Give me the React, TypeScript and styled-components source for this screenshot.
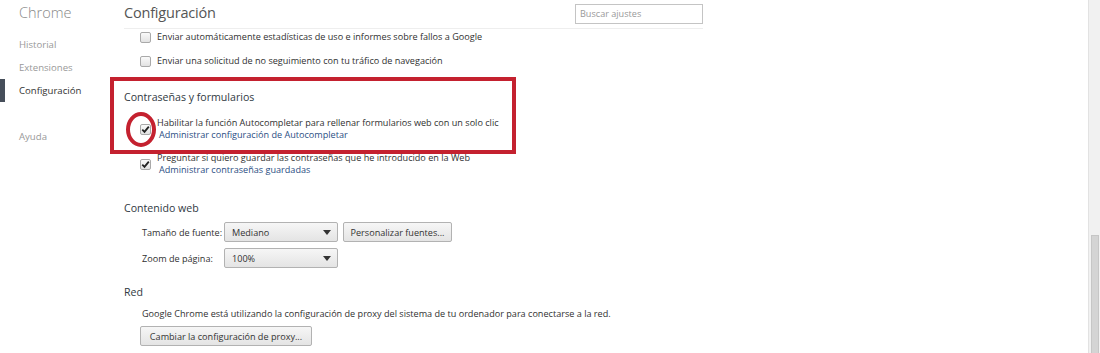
import styled, { createGlobalStyle } from 'styled-components';

const GlobalStyle = createGlobalStyle`
  html, body {
    margin: 0;
    padding: 0;
    background: #fff;
  }
  body {
    font-family: 'Open Sans', 'Noto Sans', sans-serif;
    font-size: 9.1px;
    color: #303030;
  }
`;

const Page = styled.div`
  display: flex;
  width: 1100px;
  height: 353px;
  overflow: hidden;
`;

const Sidebar = styled.nav`
  width: 110px;
  flex-shrink: 0;
  display: flex;
  flex-direction: column;
`;

const Brand = styled.div`
  height: 25px;
  padding-left: 19px;
  font-size: 14.5px;
  font-weight: 300;
  line-height: 25px;
  color: #888;
  margin-bottom: 8px;
`;

const NavItem = styled.div<{ $active?: boolean; $gap?: number }>`
  height: 23px;
  line-height: 23px;
  margin-top: ${(p) => p.$gap ?? 0}px;
  padding-left: 14px;
  font-size: 9.6px;
  color: ${(p) => (p.$active ? '#333' : '#999')};
  border-left: 5px solid ${(p) => (p.$active ? '#464e5a' : 'transparent')};
`;

const Main = styled.main`
  flex: 1;
  padding-left: 14px;
`;

const Content = styled.div`
  width: 579px;
`;

const Header = styled.header`
  height: 28px;
  display: flex;
  align-items: center;
  justify-content: space-between;
  border-bottom: 1px solid #eee;
`;

const Title = styled.h1`
  margin: -4px 0 0;
  font-size: 14.5px;
  font-weight: 400;
  letter-spacing: -0.2px;
  color: #555;
`;

const Search = styled.input`
  width: 128px;
  height: 20px;
  box-sizing: border-box;
  margin: -1px 0 0;
  border: 1px solid #c4c4c4;
  font-family: inherit;
  font-size: 9.1px;
  padding: 0 4px;
  color: #333;
  &::placeholder {
    color: #999;
  }
`;

const Row = styled.div<{ $top: number }>`
  display: flex;
  align-items: center;
  gap: 6px;
  margin-top: ${(p) => p.$top}px;
  padding-left: 16px;
`;

const Lines = styled.div`
  display: flex;
  flex-direction: column;
`;

const Line = styled.span`
  height: 12px;
  line-height: 12px;
  white-space: nowrap;
`;

const Link = styled.span`
  display: block;
  height: 12px;
  line-height: 12px;
  padding-left: 2px;
  color: #2a4e83;
  white-space: nowrap;
`;

const Box = styled.span`
  width: 11px;
  height: 11px;
  box-sizing: border-box;
  flex-shrink: 0;
  border: 1px solid #a9a9a9;
  border-radius: 2px;
  background: linear-gradient(#fafafa, #e2e2e2);
  display: flex;
  align-items: center;
  justify-content: center;
`;

const Highlight = styled.section`
  position: relative;
  width: 406px;
  height: 77px;
  box-sizing: border-box;
  margin: 10px 0 0 -14px;
  border: 4px solid #c4212f;
  padding: 8px 0 0 10px;
`;

const Ring = styled.span`
  position: absolute;
  left: 12px;
  top: 31px;
  width: 30px;
  height: 35px;
  box-sizing: border-box;
  border: 4px solid #c4212f;
  border-radius: 50%;
`;

const SectionTitle = styled.h2<{ $top?: number }>`
  margin: ${(p) => p.$top ?? 0}px 0 0;
  height: 16px;
  line-height: 16px;
  font-size: 10.6px;
  font-weight: 400;
  color: #303942;
`;

const FieldRow = styled.div<{ $top: number }>`
  display: flex;
  align-items: center;
  height: 20px;
  margin-top: ${(p) => p.$top}px;
  padding-left: 18px;
  gap: 5px;
`;

const Label = styled.span`
  width: 77px;
  white-space: nowrap;
`;

const Select = styled.div`
  width: 114px;
  height: 20px;
  box-sizing: border-box;
  display: flex;
  align-items: center;
  justify-content: space-between;
  padding: 0 6px 0 7px;
  border: 1px solid #b2b2b2;
  border-radius: 2px;
  background: linear-gradient(#f6f6f6, #e4e4e4);
  color: #333;
`;

const Arrow = styled.span`
  width: 0;
  height: 0;
  border-left: 4px solid transparent;
  border-right: 4px solid transparent;
  border-top: 5px solid #333;
`;

const Button = styled.button<{ $w: number }>`
  width: ${(p) => p.$w}px;
  height: 20px;
  padding: 0;
  border: 1px solid #b2b2b2;
  border-radius: 2px;
  background: linear-gradient(#f6f6f6, #e4e4e4);
  font-family: inherit;
  font-size: 9.1px;
  color: #333;
  white-space: nowrap;
`;

const Text = styled.p`
  margin: 8px 0 0 18px;
  height: 12px;
  line-height: 12px;
  white-space: nowrap;
`;

const ButtonRow = styled.div`
  margin-top: 6px;
  padding-left: 16px;
`;

const Scrollbar = styled.div`
  width: 11px;
  flex-shrink: 0;
  border-left: 1px solid #e2e2e2;
  background: #f1f1f1;
  display: flex;
  flex-direction: column;
  justify-content: flex-end;
  align-items: center;
`;

const Thumb = styled.div`
  width: 8px;
  height: 118px;
  box-sizing: border-box;
  background: #d4d4d4;
  border: 1px solid #c6c6c6;
  border-bottom: none;
`;

const Check = () => (
  <svg width="9" height="9" viewBox="0 0 9 9">
    <path d="M1.3 4.6 L3.5 6.8 L7.8 1.6" fill="none" stroke="#222" strokeWidth="1.8" />
  </svg>
);

export default function App() {
  return (
    <>
      <GlobalStyle />
      <Page>
        <Sidebar>
          <Brand>Chrome</Brand>
          <NavItem>Historial</NavItem>
          <NavItem>Extensiones</NavItem>
          <NavItem $active>Configuración</NavItem>
          <NavItem $gap={23}>Ayuda</NavItem>
        </Sidebar>
        <Main>
          <Content>
            <Header>
              <Title>Configuración</Title>
              <Search placeholder="Buscar ajustes" />
            </Header>
            <Row $top={2}>
              <Box />
              <Line>Enviar automáticamente estadísticas de uso e informes sobre fallos a Google</Line>
            </Row>
            <Row $top={12}>
              <Box />
              <Line>Enviar una solicitud de no seguimiento con tu tráfico de navegación</Line>
            </Row>
            <Highlight>
              <SectionTitle>Contraseñas y formularios</SectionTitle>
              <Row $top={12}>
                <Box>
                  <Check />
                </Box>
                <Lines>
                  <Line>Habilitar la función Autocompletar para rellenar formularios web con un solo clic</Line>
                  <Link>Administrar configuración de Autocompletar</Link>
                </Lines>
              </Row>
              <Ring />
            </Highlight>
            <Row $top={-2}>
              <Box>
                <Check />
              </Box>
              <Lines>
                <Line>Preguntar si quiero guardar las contraseñas que he introducido en la Web</Line>
                <Link>Administrar contraseñas guardadas</Link>
              </Lines>
            </Row>
            <SectionTitle $top={24}>Contenido web</SectionTitle>
            <FieldRow $top={6}>
              <Label>Tamaño de fuente:</Label>
              <Select>
                Mediano
                <Arrow />
              </Select>
              <Button $w={109}>Personalizar fuentes...</Button>
            </FieldRow>
            <FieldRow $top={6}>
              <Label>Zoom de página:</Label>
              <Select>
                100%
                <Arrow />
              </Select>
            </FieldRow>
            <SectionTitle $top={16}>Red</SectionTitle>
            <Text>Google Chrome está utilizando la configuración de proxy del sistema de tu ordenador para conectarse a la red.</Text>
            <ButtonRow>
              <Button $w={172}>Cambiar la configuración de proxy...</Button>
            </ButtonRow>
          </Content>
        </Main>
        <Scrollbar>
          <Thumb />
        </Scrollbar>
      </Page>
    </>
  );
}
